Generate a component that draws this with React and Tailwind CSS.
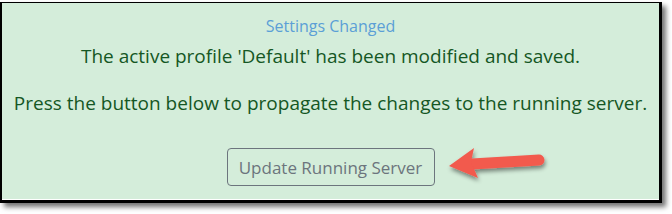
import React from "react";

export default function App() {
  return (
    <div className="w-[672px] h-[214px] bg-white pt-[2px]" style={{ fontFamily: '"Open Sans", "Liberation Sans", sans-serif' }}>
      <div className="relative w-[662px] h-[201px] border-l-2 border-t border-r-[3px] border-b-[3px] border-black shadow-[4px_4px_5px_rgba(0,0,0,0.55)]">
        <div className="h-full bg-[#d4edda] border-b border-white flex flex-col items-center text-[#155724]">
          <div className="mt-[11px] text-[16px] leading-[24px] text-[#5b9fd6]">Settings Changed</div>
          <p className="mt-[4px] text-[19px] leading-[28px]">The active profile 'Default' has been modified and saved.</p>
          <p className="mt-[19px] text-[19px] leading-[28px]">Press the button below to propagate the changes to the running server.</p>
          <button className="mt-[31px] w-[208px] h-[38px] rounded-[4px] border border-[#6c757d] text-[#6c757d] text-[17px] leading-none">
            Update Running Server
          </button>
        </div>
        <svg className="absolute left-[438px] top-[139px]" width="115" height="50" viewBox="0 0 115 50">
          <defs>
            <filter id="sh" x="-20%" y="-30%" width="140%" height="180%">
              <feDropShadow dx="1" dy="3" stdDeviation="2" floodColor="#000" floodOpacity="0.45" />
            </filter>
          </defs>
          <g filter="url(#sh)">
            <path d="M 32 22 L 99 18" stroke="#f25a4e" strokeWidth="11" strokeLinecap="round" fill="none" />
            <path d="M 9 24 L 34 6 L 31 20 L 38 36 Z" fill="#f25a4e" />
          </g>
        </svg>
      </div>
    </div>
  );
}
